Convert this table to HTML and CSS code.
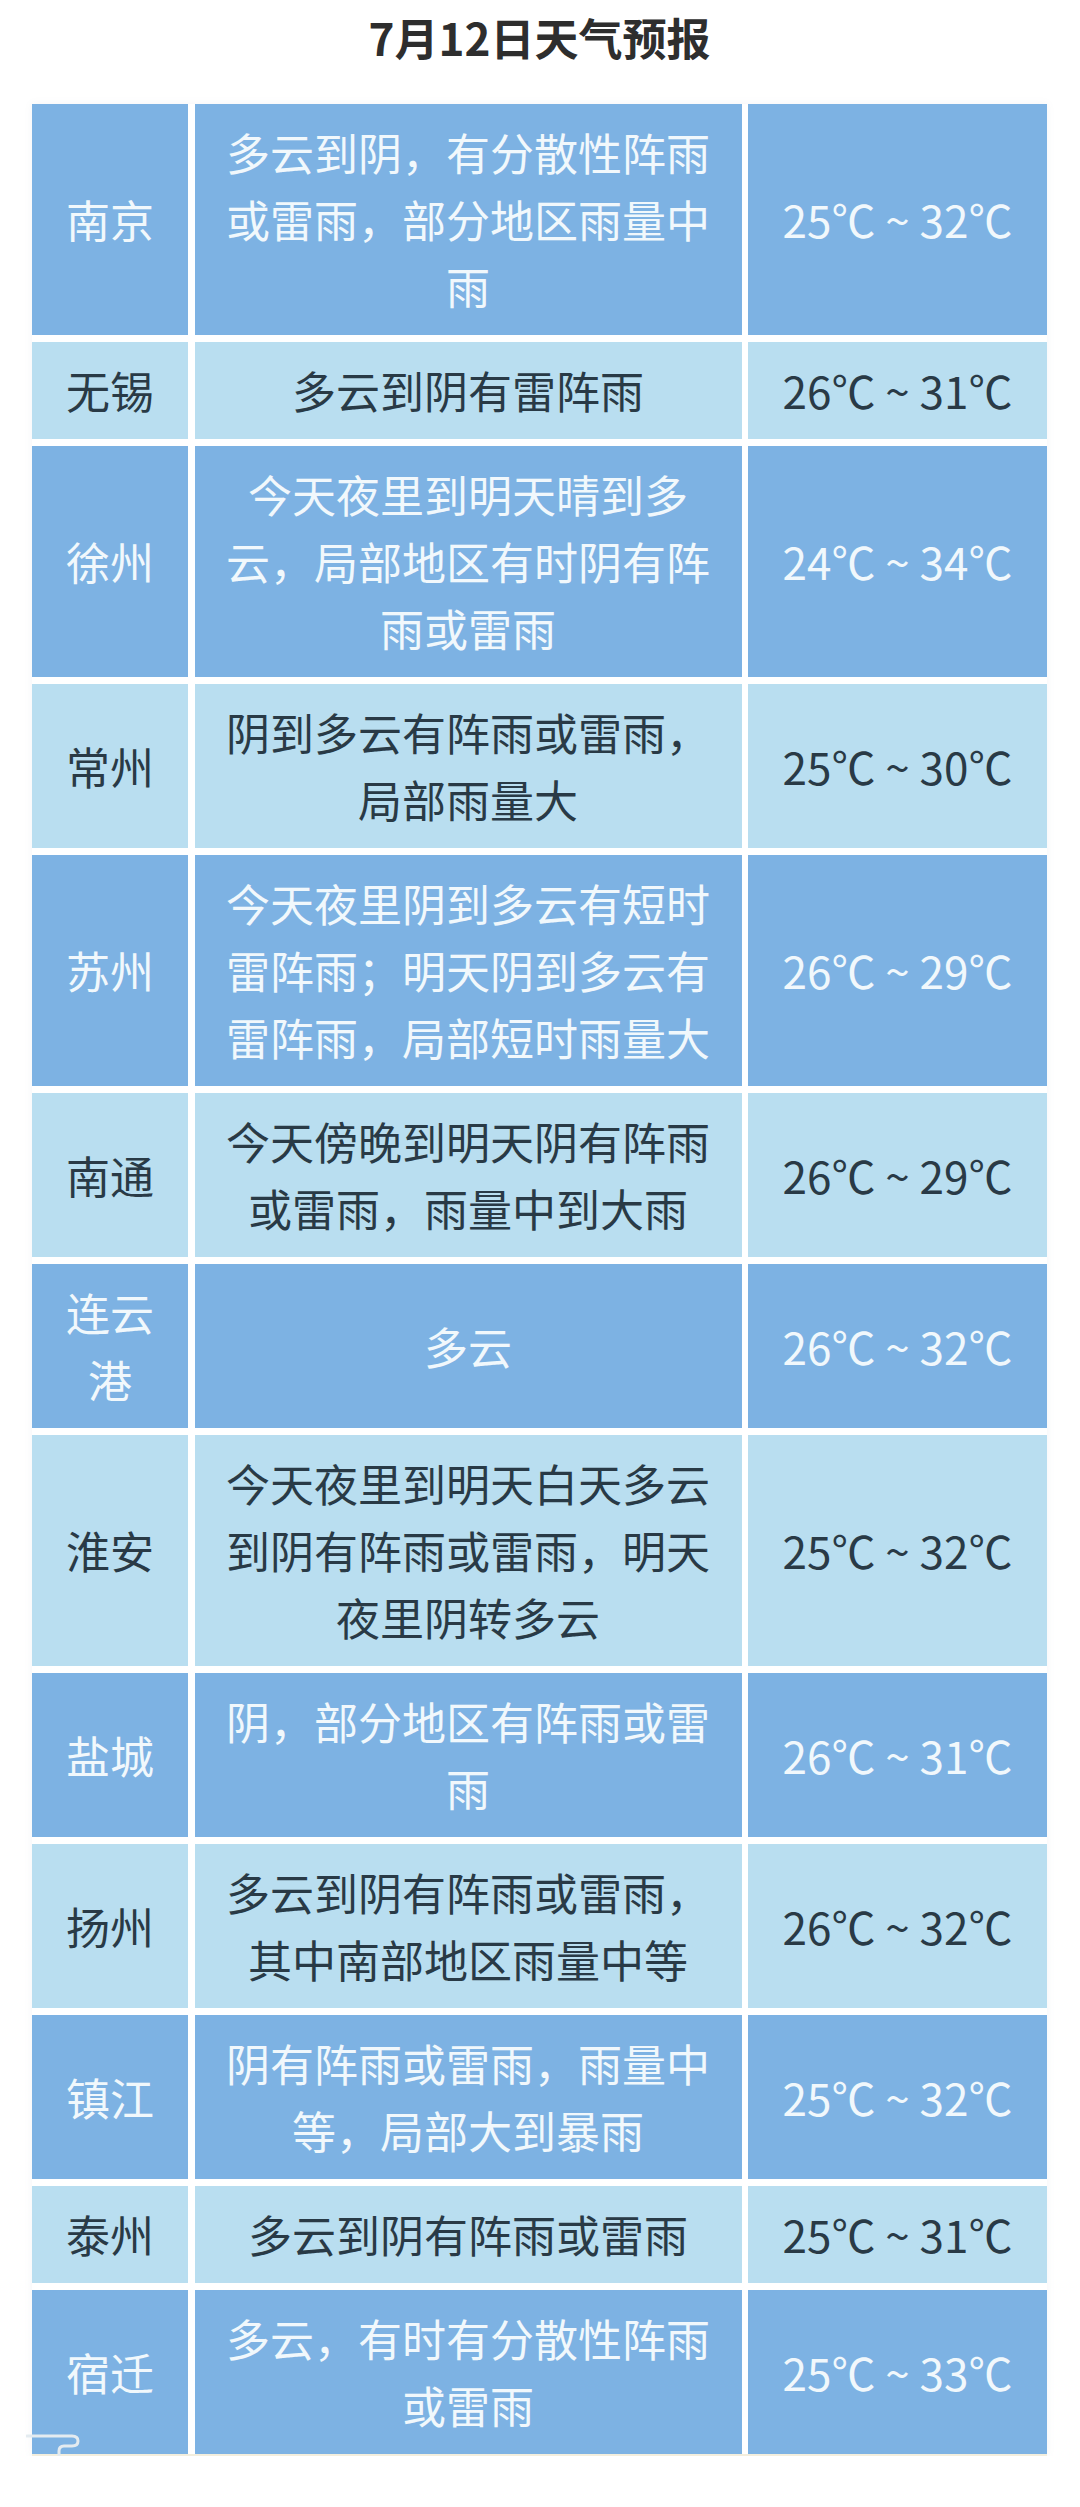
FILE: index.html
```html
<!DOCTYPE html>
<html lang="zh-CN">
<head>
<meta charset="utf-8">
<title>7月12日天气预报</title>
<link rel="stylesheet" href="styles.css">
</head>
<body>
<div class="page">
  <h1 class="title">7月12日天气预报</h1>
  <div class="table">
    <div class="row dark">
      <div class="cell city">南京</div>
      <div class="cell desc">多云到阴，有分散性阵雨<br>或雷雨，部分地区雨量中<br>雨</div>
      <div class="cell temp">25℃ ~ 32℃</div>
    </div>
    <div class="row light">
      <div class="cell city">无锡</div>
      <div class="cell desc">多云到阴有雷阵雨</div>
      <div class="cell temp">26℃ ~ 31℃</div>
    </div>
    <div class="row dark">
      <div class="cell city">徐州</div>
      <div class="cell desc">今天夜里到明天晴到多<br>云，局部地区有时阴有阵<br>雨或雷雨</div>
      <div class="cell temp">24℃ ~ 34℃</div>
    </div>
    <div class="row light">
      <div class="cell city">常州</div>
      <div class="cell desc">阴到多云有阵雨或雷雨，<br>局部雨量大</div>
      <div class="cell temp">25℃ ~ 30℃</div>
    </div>
    <div class="row dark">
      <div class="cell city">苏州</div>
      <div class="cell desc">今天夜里阴到多云有短时<br>雷阵雨；明天阴到多云有<br>雷阵雨，局部短时雨量大</div>
      <div class="cell temp">26℃ ~ 29℃</div>
    </div>
    <div class="row light">
      <div class="cell city">南通</div>
      <div class="cell desc">今天傍晚到明天阴有阵雨<br>或雷雨，雨量中到大雨</div>
      <div class="cell temp">26℃ ~ 29℃</div>
    </div>
    <div class="row dark">
      <div class="cell city">连云<br>港</div>
      <div class="cell desc">多云</div>
      <div class="cell temp">26℃ ~ 32℃</div>
    </div>
    <div class="row light">
      <div class="cell city">淮安</div>
      <div class="cell desc">今天夜里到明天白天多云<br>到阴有阵雨或雷雨，明天<br>夜里阴转多云</div>
      <div class="cell temp">25℃ ~ 32℃</div>
    </div>
    <div class="row dark">
      <div class="cell city">盐城</div>
      <div class="cell desc">阴，部分地区有阵雨或雷<br>雨</div>
      <div class="cell temp">26℃ ~ 31℃</div>
    </div>
    <div class="row light">
      <div class="cell city">扬州</div>
      <div class="cell desc">多云到阴有阵雨或雷雨，<br>其中南部地区雨量中等</div>
      <div class="cell temp">26℃ ~ 32℃</div>
    </div>
    <div class="row dark">
      <div class="cell city">镇江</div>
      <div class="cell desc">阴有阵雨或雷雨，雨量中<br>等，局部大到暴雨</div>
      <div class="cell temp">25℃ ~ 32℃</div>
    </div>
    <div class="row light">
      <div class="cell city">泰州</div>
      <div class="cell desc">多云到阴有阵雨或雷雨</div>
      <div class="cell temp">25℃ ~ 31℃</div>
    </div>
    <div class="row dark">
      <div class="cell city">宿迁</div>
      <div class="cell desc">多云，有时有分散性阵雨<br>或雷雨</div>
      <div class="cell temp">25℃ ~ 33℃</div>
    </div>
    <svg class="corner" width="56" height="24" viewBox="0 0 56 24" aria-hidden="true">
      <path d="M1 4 H46 Q52 4 52 9 Q52 14 46 14 H38 Q33 14 33 19 V24" fill="none" stroke="#e4ebf0" stroke-width="3" stroke-linecap="round"/>
    </svg>
  </div>
</div>
</body>
</html>
```
FILE: styles.css
```css
html, body {
  margin: 0;
  padding: 0;
  background: #ffffff;
}

body {
  font-family: "Noto Sans CJK SC", "Noto Sans", sans-serif;
}

.page {
  width: 1080px;
  padding: 0 33px 0 32px;
  box-sizing: border-box;
}

.title {
  margin: 0 0 29px 0;
  height: 75px;
  line-height: 75px;
  text-align: center;
  font-size: 44px;
  font-weight: 700;
  color: #2e2e2e;
}

.table {
  position: relative;
  display: flex;
  flex-direction: column;
  gap: 7px;
  background: #ffffff;
  box-shadow: 0 0 8px rgba(120, 130, 140, 0.08);
  border-bottom: 2px solid #f3eedd;
}

.row {
  display: grid;
  grid-template-columns: 156px 1fr 299px;
  column-gap: 6.5px;
}

.cell {
  display: flex;
  align-items: center;
  justify-content: center;
  text-align: center;
  font-size: 44px;
  line-height: 67px;
  padding: 15px 0;
}

.dark .cell {
  background: #7db2e3;
  color: #f1f8fc;
}

.light .cell {
  background: #b9def0;
  color: #293a46;
}

.temp {
  white-space: nowrap;
}

.corner {
  position: absolute;
  left: -6px;
  bottom: -2px;
}
```
